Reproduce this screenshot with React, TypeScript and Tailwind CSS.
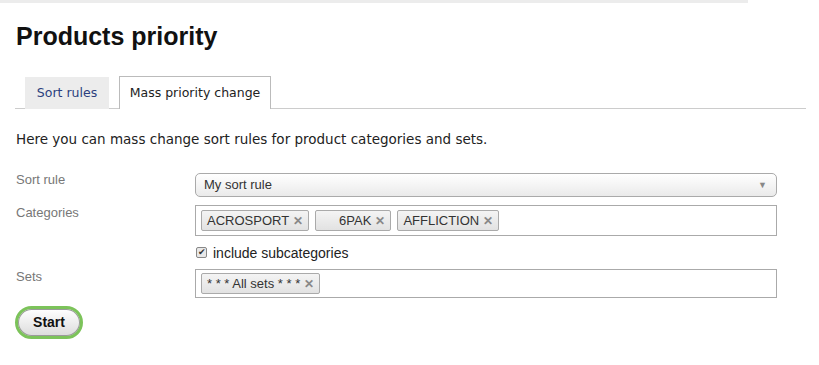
import React from 'react';

function Tag({ label, pad = 'pl-[5px]' }: { label: string; pad?: string }) {
  return (
    <span
      className={`flex h-[21px] items-center gap-[4px] rounded-[2px] border border-[#aaa] bg-gradient-to-b from-[#f4f4f4] to-[#e2e2e2] pr-[5px] text-[13px] text-[#333] ${pad}`}
    >
      {label}
      <span className="text-[12px] font-bold leading-none text-[#888]">✕</span>
    </span>
  );
}

export default function App() {
  return (
    <div className="relative h-[365px] w-[819px] overflow-hidden bg-white font-['Liberation_Sans',Arial,sans-serif]">
      <div className="h-[3px] w-[748px] bg-[#ececec]" />

      <div className="px-[15px]">
        <h1 className="mt-[18px] pl-px text-[25px] font-bold leading-[30px] text-[#111]">Products priority</h1>

        {/* tabs */}
        <div className="mt-[25px] flex w-[791px] items-end gap-[10px] border-b border-[#ccc] pl-[10px] font-['DejaVu_Sans',Verdana,sans-serif] text-[12.5px]">
          <div className="mb-[-1px] flex h-[32px] w-[84px] items-center justify-center border border-b-0 border-[#ececec] bg-[#ececec] text-[#2b3f7e]">
            Sort rules
          </div>
          <div className="mb-[-1px] flex h-[33px] w-[152px] items-center justify-center border border-b-0 border-[#bbb] bg-white text-[#222]">
            Mass priority change
          </div>
        </div>

        <p className="mt-[21px] pl-px font-['DejaVu_Sans',Verdana,sans-serif] text-[13.5px] leading-[18px] text-[#222]">
          Here you can mass change sort rules for product categories and sets.
        </p>

        {/* form */}
        <div className="mt-[25px] grid grid-cols-[180px_582px] gap-y-[8px] text-[13px] leading-[16px]">
          <div className="mt-[-1px] pl-px text-[#777]">Sort rule</div>
          <div className="flex h-[24px] items-center justify-between rounded-[5px] border border-[#aaa] bg-gradient-to-b from-white to-[#eaeaea] pl-[8px] pr-[9px] text-[#333]">
            My sort rule
            <span className="text-[9px] text-[#888]">▼</span>
          </div>

          <div className="pl-px text-[#777]">Categories</div>
          <div className="flex h-[31px] items-center gap-[6px] border border-[#aaa] bg-white pl-[5px]">
            <Tag label="ACROSPORT" />
            <Tag label="6PAK" pad="pl-[23px]" />
            <Tag label="AFFLICTION" />
          </div>

          <div />
          <label className="flex h-[17px] items-center gap-[6px] pl-px text-[14px] text-[#222]">
            <span className="flex h-[11px] w-[11px] items-center justify-center rounded-[2px] border border-[#888] bg-[#e8e8e8] text-[9px] leading-none text-[#333]">
              ✔
            </span>
            include subcategories
          </label>

          <div className="pl-px text-[#777]">Sets</div>
          <div className="flex h-[29px] items-center border border-[#aaa] bg-white pl-[5px]">
            <Tag label="* * * All sets * * *" />
          </div>
        </div>

        <button className="mt-[8px] flex h-[33px] w-[68px] items-center justify-center rounded-full border-[3px] border-[#7cc35a] bg-gradient-to-b from-white to-[#dcdcdc] text-[14px] font-bold text-[#111] shadow-[inset_0_0_0_1px_#9a9a9a]">
          Start
        </button>
      </div>
    </div>
  );
}
